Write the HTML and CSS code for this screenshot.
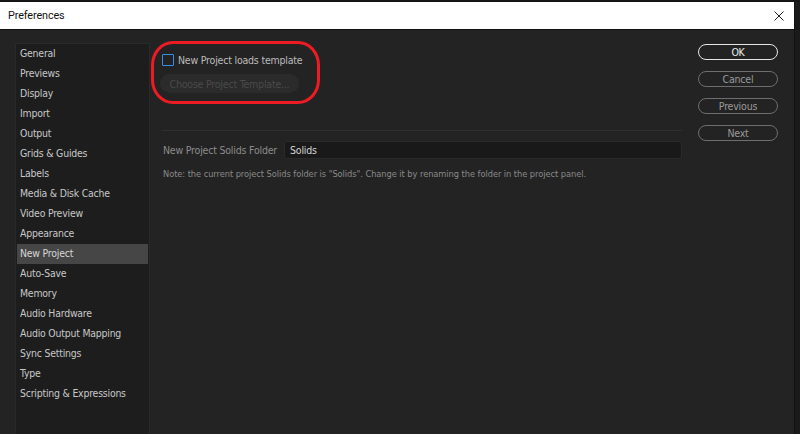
FILE: index.html
```html
<!DOCTYPE html>
<html>
<head>
<meta charset="utf-8">
<link rel="stylesheet" href="styles.css">
</head>
<body>
<div class="topstrip"></div>
<div class="window">
  <div class="titlebar">
    <span class="title">Preferences</span>
    <svg class="close" width="10" height="10" viewBox="0 0 10 10"><path d="M0.5 0.5 L9.5 9.5 M9.5 0.5 L0.5 9.5" stroke="#222" stroke-width="1" fill="none"/></svg>
  </div>
  <div class="body">
    <ul class="sidebar">
      <li>General</li>
      <li>Previews</li>
      <li>Display</li>
      <li>Import</li>
      <li>Output</li>
      <li>Grids &amp; Guides</li>
      <li>Labels</li>
      <li>Media &amp; Disk Cache</li>
      <li>Video Preview</li>
      <li>Appearance</li>
      <li class="active">New Project</li>
      <li>Auto-Save</li>
      <li>Memory</li>
      <li>Audio Hardware</li>
      <li>Audio Output Mapping</li>
      <li>Sync Settings</li>
      <li>Type</li>
      <li>Scripting &amp; Expressions</li>
    </ul>
    <div class="content">
      <div class="template">
        <label class="check"><span class="box"></span>New Project loads template</label>
        <button class="choose">Choose Project Template...</button>
        <div class="annot"></div>
      </div>
      <div class="sep"></div>
      <div class="field">
        <span class="flabel">New Project Solids Folder</span>
        <div class="input">Solids</div>
      </div>
      <p class="note">Note: the current project Solids folder is "Solids". Change it by renaming the folder in the project panel.</p>
    </div>
    <div class="buttons">
      <button class="btn primary">OK</button>
      <button class="btn">Cancel</button>
      <button class="btn">Previous</button>
      <button class="btn">Next</button>
    </div>
  </div>
</div>
</body>
</html>
```
FILE: styles.css
```css
* { box-sizing: border-box; }
html, body { margin: 0; padding: 0; }
body {
  width: 800px; height: 434px; overflow: hidden;
  background: #1a1a1a;
  font-family: "DejaVu Sans Condensed", "DejaVu Sans", sans-serif;
}
.topstrip { height: 2px; background: #151515; }
.window {
  width: 795px; height: 432px;
  background: #232323;
  border-right: 1px solid #111;
  display: flex; flex-direction: column;
}
.titlebar {
  height: 28px; background: #fff;
  border-bottom: 1px solid #111;
  display: flex; align-items: center; justify-content: space-between;
  padding: 0 10px 0 8px;
}
.title { font-size: 10.8px; color: #111; font-family: Roboto, "Open Sans", sans-serif; letter-spacing: -0.1px; }
.close { display: block; }
.body { flex: 1; display: flex; padding-top: 13px; }
.sidebar {
  list-style: none; margin: 0 0 0 15px; padding: 0 1px;
  width: 135px;
  background: #1d1d1d;
  border: 1px solid #2a2a2a; border-bottom: none;
}
.sidebar li {
  height: 20px; line-height: 18px;
  padding-left: 3px;
  font-size: 10.4px; color: #c8c8c8;
  letter-spacing: -0.2px;
}
.sidebar li.active { background: #464646; color: #d8d8d8; }
.content { flex: 1; padding: 9px 0 0 12px; }
.template { position: relative; width: 160px; height: 56px; }
.check {
  display: flex; align-items: center;
  font-size: 10.5px; color: #bcbcbc; height: 16px;
  letter-spacing: -0.2px;
}
.box {
  width: 12px; height: 12px; border: 1.5px solid #3a8ee6;
  border-radius: 1px; margin-right: 4px; margin-left: 0;
}
.choose {
  margin-top: 6px; margin-left: -2px;
  height: 19px; width: 139px;
  border-radius: 10px; border: none;
  background: #2b2b2b; color: #4a4a4a;
  font-family: inherit; letter-spacing: -0.2px;
  font-size: 10.5px; padding: 0;
}
.annot {
  position: absolute; left: -11px; top: -11px;
  width: 169px; height: 63px;
  border: 3px solid #ec1c24; border-radius: 22px / 24px;
}
.sep { height: 1px; background: #2f2f2f; width: 520px; margin-top: 22px; }
.field { display: flex; align-items: center; margin-top: 10px; width: 520px; }
.flabel {
  font-size: 10.5px; color: #8c8c8c; width: 122px; padding-left: 1px;
  white-space: nowrap; letter-spacing: -0.2px;
}
.input {
  flex: 1; height: 18px; line-height: 16px;
  background: #191919; border: 1px solid #2a2a2a; border-radius: 2px;
  padding-left: 5px;
  font-size: 10.5px; color: #d4d4d4; letter-spacing: -0.2px;
}
.note {
  margin: 9px 0 0 1px;
  font-size: 9.2px; color: #8a8a8a; letter-spacing: -0.05px;
}
.buttons {
  width: 95px; display: flex; flex-direction: column; align-items: flex-end; gap: 11px;
  margin-right: 16px; padding-top: 1px;
}
.btn {
  width: 80px; height: 16px; border-radius: 8px;
  border: 1.5px solid #6e6e6e; background: transparent;
  color: #9a9a9a; padding: 0;
  font-family: inherit;
  font-size: 10.5px; line-height: 13px; letter-spacing: -0.2px;
}
.btn.primary { border-color: #e6e6e6; color: #ececec; }
```
